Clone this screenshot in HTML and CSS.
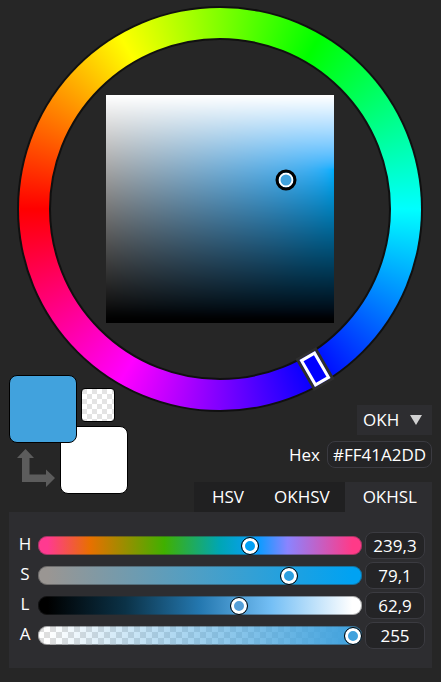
FILE: index.html
```html
<!DOCTYPE html>
<html lang="en">
<head>
<meta charset="utf-8">
<title>Color picker</title>
<link rel="stylesheet" href="styles.css">
</head>
<body>
<main class="picker">
  <div class="wheel">
    <div class="wheel-hues"></div>
    <div class="wheel-hole"></div>
    <div class="wheel-marker"></div>
    <div class="field">
      <canvas class="field-canvas" id="field" width="228" height="228"></canvas>
      <div class="field-marker"></div>
    </div>
  </div>

  <section class="tools">
    <div class="swatches">
      <button class="swatch secondary" type="button" aria-label="Secondary color"></button>
      <button class="swatch primary" type="button" aria-label="Primary color"></button>
      <button class="swatch clear" type="button" aria-label="Transparent"></button>
      <button class="swap" type="button" aria-label="Swap colors">
        <svg viewBox="0 0 38 38" width="38" height="38"><path fill="#5c5c5c" d="M8.500 0L17 9H12.500V25.500H29V20.500L38 29L29 38V33H5V9H0Z"/></svg>
      </button>
    </div>
    <div class="options">
      <div class="model">
        <select class="model-select" aria-label="Color model"><option>OKH</option></select>
        <svg class="model-arrow" viewBox="0 0 12 10" width="12" height="10"><path fill="#d0d0d0" d="M0 0H12L6 10Z"/></svg>
      </div>
      <div class="hex">
        <label for="hex">Hex</label>
        <input class="box hex-box" id="hex" type="text" value="#FF41A2DD">
      </div>
      <div class="tabs" role="tablist">
        <button class="tab" type="button" role="tab">HSV</button>
        <button class="tab" type="button" role="tab">OKHSV</button>
        <button class="tab active" type="button" role="tab" aria-selected="true">OKHSL</button>
      </div>
    </div>
  </section>

  <section class="panel">
    <div class="row">
      <label for="h">H</label>
      <input class="slider hue" id="h" type="range" min="0" max="360" step="0.1" value="239.3">
      <input class="box" type="text" value="239,3" aria-label="H value">
    </div>
    <div class="row">
      <label for="s">S</label>
      <input class="slider saturation" id="s" type="range" min="0" max="100" step="0.1" value="79.1">
      <input class="box" type="text" value="79,1" aria-label="S value">
    </div>
    <div class="row">
      <label for="l">L</label>
      <input class="slider lightness" id="l" type="range" min="0" max="100" step="0.1" value="62.9">
      <input class="box" type="text" value="62,9" aria-label="L value">
    </div>
    <div class="row">
      <label for="a">A</label>
      <input class="slider alpha" id="a" type="range" min="0" max="255" value="255">
      <input class="box" type="text" value="255" aria-label="A value">
    </div>
  </section>
</main>
<script src="picker.js"></script>
</body>
</html>
```
FILE: styles.css
```css
* { box-sizing: border-box; }

body {
  margin: 0;
  background: #262626;
  color: #fff;
  font: 17px/24px "Open Sans", "Noto Sans", sans-serif;
}

button, input, select { font: inherit; color: inherit; margin: 0; }
button { border: 0; padding: 0; background: none; }

.picker { padding: 6px 9px 14px; }

/* Hue wheel */
.wheel {
  position: relative;
  margin: 0 9px 0 8px;
  aspect-ratio: 1;
  border-radius: 50%;
  background: #101010;
}
.wheel-hues, .wheel-hole { position: absolute; border-radius: 50%; }
.wheel-hues {
  inset: 2px;
  background: conic-gradient(from 270deg, #f00, #ff0, #0f0, #0ff, #00f, #f0f, #f00);
}
.wheel-hole { inset: 32px; background: #262626; border: 2px solid #101010; }
.wheel-marker {
  position: absolute;
  left: 73.5%;
  top: 89.5%;
  width: 18px;
  height: 31px;
  border: 3px solid #fff;
  background: #00f;
  box-shadow: 0 0 0 3px #2e2e2e;
  transform: translate(-50%, -50%) rotate(-30deg);
}

/* Saturation and lightness field */
.field { position: absolute; inset: 22%; }
.field-canvas { display: block; width: 100%; height: 100%; }
.field-marker {
  position: absolute;
  left: 79.1%;
  top: 37.1%;
  width: 21px;
  height: 21px;
  border: 3px solid #000;
  border-radius: 50%;
  background: #41a2dd;
  box-shadow: inset 0 0 0 2px #fff;
  transform: translate(-50%, -50%);
}

/* Swatches and options */
.tools {
  position: relative;
  display: flex;
  justify-content: space-between;
  margin-top: -37px;
}
.swatches { position: relative; width: 119px; height: 119px; }
.swatch { position: absolute; border: 1px solid #000; border-radius: 8px; }
.swatch.primary { left: 0; top: 0; width: 68px; height: 68px; background: #41a2dd; }
.swatch.secondary { right: 0; bottom: 0; width: 68px; height: 68px; background: #fff; }
.swatch.clear {
  right: 13px;
  top: 13px;
  width: 34px;
  height: 34px;
  border-radius: 4px;
  background: repeating-conic-gradient(#fff 0 25%, #e3e3e3 0 50%) 0 0 / 10px 10px;
}
.swap { position: absolute; left: 8px; top: 74px; }
.swap svg { display: block; }

.options {
  display: flex;
  flex-direction: column;
  align-items: flex-end;
  padding-top: 30px;
}
.model { position: relative; width: 75px; height: 30px; }
.model-select {
  width: 100%;
  height: 100%;
  padding: 0 6px;
  border: 0;
  border-radius: 0;
  background: #2d2d30;
  appearance: none;
}
.model-arrow { position: absolute; right: 10px; top: 10px; pointer-events: none; }

.hex { display: flex; align-items: center; gap: 7px; margin: 6px 0 14px; }
.box {
  width: 60px;
  height: 27px;
  padding: 0;
  border: 1px solid #3b3b41;
  border-radius: 8px;
  background: #242426;
  text-align: center;
}
.hex-box { width: 105px; }

.tabs { display: flex; }
.tab { height: 30px; padding: 0 15px; background: #202021; }
.tab:first-child { padding-left: 18px; }
.tab.active { padding: 0 15px 0 18px; background: #2d2d30; }

/* Channel sliders */
.panel {
  display: grid;
  gap: 3px;
  padding: 20px 7px 19px 6px;
  background: #2d2d30;
}
.row { display: flex; align-items: center; }
.row label { width: 20px; margin-right: 3px; padding-bottom: 3px; text-align: center; }
.row .box { margin-left: 3px; }
.slider {
  flex: 1;
  min-width: 0;
  height: 19px;
  border-radius: 9px;
  box-shadow: inset 0 0 0 1px rgba(45, 45, 48, 0.4);
  appearance: none;
  --thumb: #41a2dd;
}
.slider::-webkit-slider-thumb {
  appearance: none;
  width: 18px;
  height: 18px;
  border: 1px solid #000;
  border-radius: 50%;
  background: var(--thumb);
  box-shadow: inset 0 0 0 3px #fff;
}
.slider.hue {
  --thumb: #00a0f5;
  background: linear-gradient(90deg, #ff3a90 3%, #e87000 16%, #40b000 39%, #00a6b4 56%, #0a9cff 68%, #8a84ff 77%, #ff3a88 97%);
}
.slider.saturation {
  --thumb: #2b9fdf;
  background: linear-gradient(90deg, #9a9693 3%, #4d9fc6 50%, #00a2f2 97%);
}
.slider.lightness {
  --thumb: #559fd8;
  background: linear-gradient(90deg, #000 3%, #0b3247 27%, #2478b0 50%, #74bff5 72%, #fff 97%);
}
.slider.alpha {
  background:
    linear-gradient(90deg, transparent 3%, #41a2dd 97%),
    repeating-conic-gradient(#fff 0 25%, #dedede 0 50%) 0 0 / 12px 12px;
}
```
FILE: picker.js
```js
// OKHSL conversion, after Björn Ottosson's reference implementation.
const K1 = 0.206, K2 = 0.03, K3 = (1 + K1) / (1 + K2);

function toeInv(x) {
  return (x * x + K1 * x) / (K3 * (x + K2));
}

function lmsFactors(a, b) {
  return [
    0.3963377774 * a + 0.2158037573 * b,
    -0.1055613458 * a - 0.0638541728 * b,
    -0.0894841775 * a - 1.2914855480 * b
  ];
}

const TO_RGB = [
  [4.0767416621, -3.3077115913, 0.2309699292],
  [-1.2684380046, 2.6097574011, -0.3413193965],
  [-0.0041960863, -0.7034186147, 1.7076147010]
];

function labToLinear(L, a, b) {
  const lms = lmsFactors(a, b).map(k => (L + k) ** 3);
  return TO_RGB.map(m => m[0] * lms[0] + m[1] * lms[1] + m[2] * lms[2]);
}

// Chroma at which the colour leaves the sRGB gamut, by bisection.
function maxChroma(L, a, b) {
  let lo = 0, hi = 0.5;
  for (let i = 0; i < 24; i++) {
    const mid = (lo + hi) / 2;
    const rgb = labToLinear(L, a * mid, b * mid);
    if (rgb.every(v => v >= -1e-6 && v <= 1 + 1e-6)) lo = mid; else hi = mid;
  }
  return lo;
}

function cusp(a, b) {
  let lo = 0, hi = 2;
  for (let i = 0; i < 32; i++) {
    const mid = (lo + hi) / 2;
    if (Math.min(...labToLinear(1, a * mid, b * mid)) >= 0) lo = mid; else hi = mid;
  }
  const L = Math.cbrt(1 / Math.max(...labToLinear(1, a * lo, b * lo)));
  return [L, L * lo];
}

function midST(a, b) {
  const S = 0.11516993 + 1 / (7.44778970 + 4.15901240 * b +
    a * (-2.19557347 + 1.75198401 * b +
    a * (-2.13704948 - 10.02301043 * b +
    a * (-4.24894561 + 5.38770819 * b + 4.69891013 * a))));
  const T = 0.11239642 + 1 / (1.61320320 - 0.68124379 * b +
    a * (0.40370612 + 0.90148123 * b +
    a * (-0.27087943 + 0.61223990 * b +
    a * (0.00299215 - 0.45399568 * b - 0.14661872 * a))));
  return [S, T];
}

function chromas(L, a, b) {
  const [Lc, Cc] = cusp(a, b);
  const cMax = maxChroma(L, a, b);
  const k = cMax / Math.min(L * Cc / Lc, (1 - L) * Cc / (1 - Lc));
  const [S, T] = midST(a, b);
  const ma = L * S, mb = (1 - L) * T;
  const cMid = 0.9 * k * Math.sqrt(Math.sqrt(1 / (1 / ma ** 4 + 1 / mb ** 4)));
  const za = L * 0.4, zb = (1 - L) * 0.8;
  const c0 = Math.sqrt(1 / (1 / za ** 2 + 1 / zb ** 2));
  return [c0, cMid, cMax];
}

function saturate(s, [c0, cMid, cMax]) {
  if (s < 0.8) {
    const t = s / 0.8;
    const k1 = 0.8 * c0, k2 = 1 - k1 / cMid;
    return t * k1 / (1 - k2 * t);
  }
  const t = (s - 0.8) / 0.2;
  const k1 = 0.2 * cMid * cMid * 1.25 * 1.25 / c0;
  const k2 = 1 - k1 / (cMax - cMid);
  return cMid + t * k1 / (1 - k2 * t);
}

function encode(v) {
  const c = Math.min(1, Math.max(0, v));
  return Math.round(255 * (c <= 0.0031308 ? 12.92 * c : 1.055 * c ** (1 / 2.4) - 0.055));
}

// Colours along one row of the field, as a function of saturation.
function okhslLine(h, l) {
  const a = Math.cos(h * Math.PI / 180), b = Math.sin(h * Math.PI / 180);
  if (l <= 0) return () => [0, 0, 0];
  if (l >= 1) return () => [255, 255, 255];
  const L = toeInv(l), cs = chromas(L, a, b);
  return s => {
    const C = saturate(s, cs);
    return labToLinear(L, C * a, C * b).map(encode);
  };
}

function drawField(canvas, hue) {
  const ctx = canvas.getContext("2d");
  const { width, height } = canvas;
  const image = ctx.createImageData(width, height);
  for (let y = 0; y < height; y++) {
    const line = okhslLine(hue, 1 - y / (height - 1));
    for (let x = 0; x < width; x++) {
      const [r, g, b] = line(x / (width - 1));
      image.data.set([r, g, b, 255], 4 * (y * width + x));
    }
  }
  ctx.putImageData(image, 0, 0);
}

drawField(document.getElementById("field"), 239.3);
```
